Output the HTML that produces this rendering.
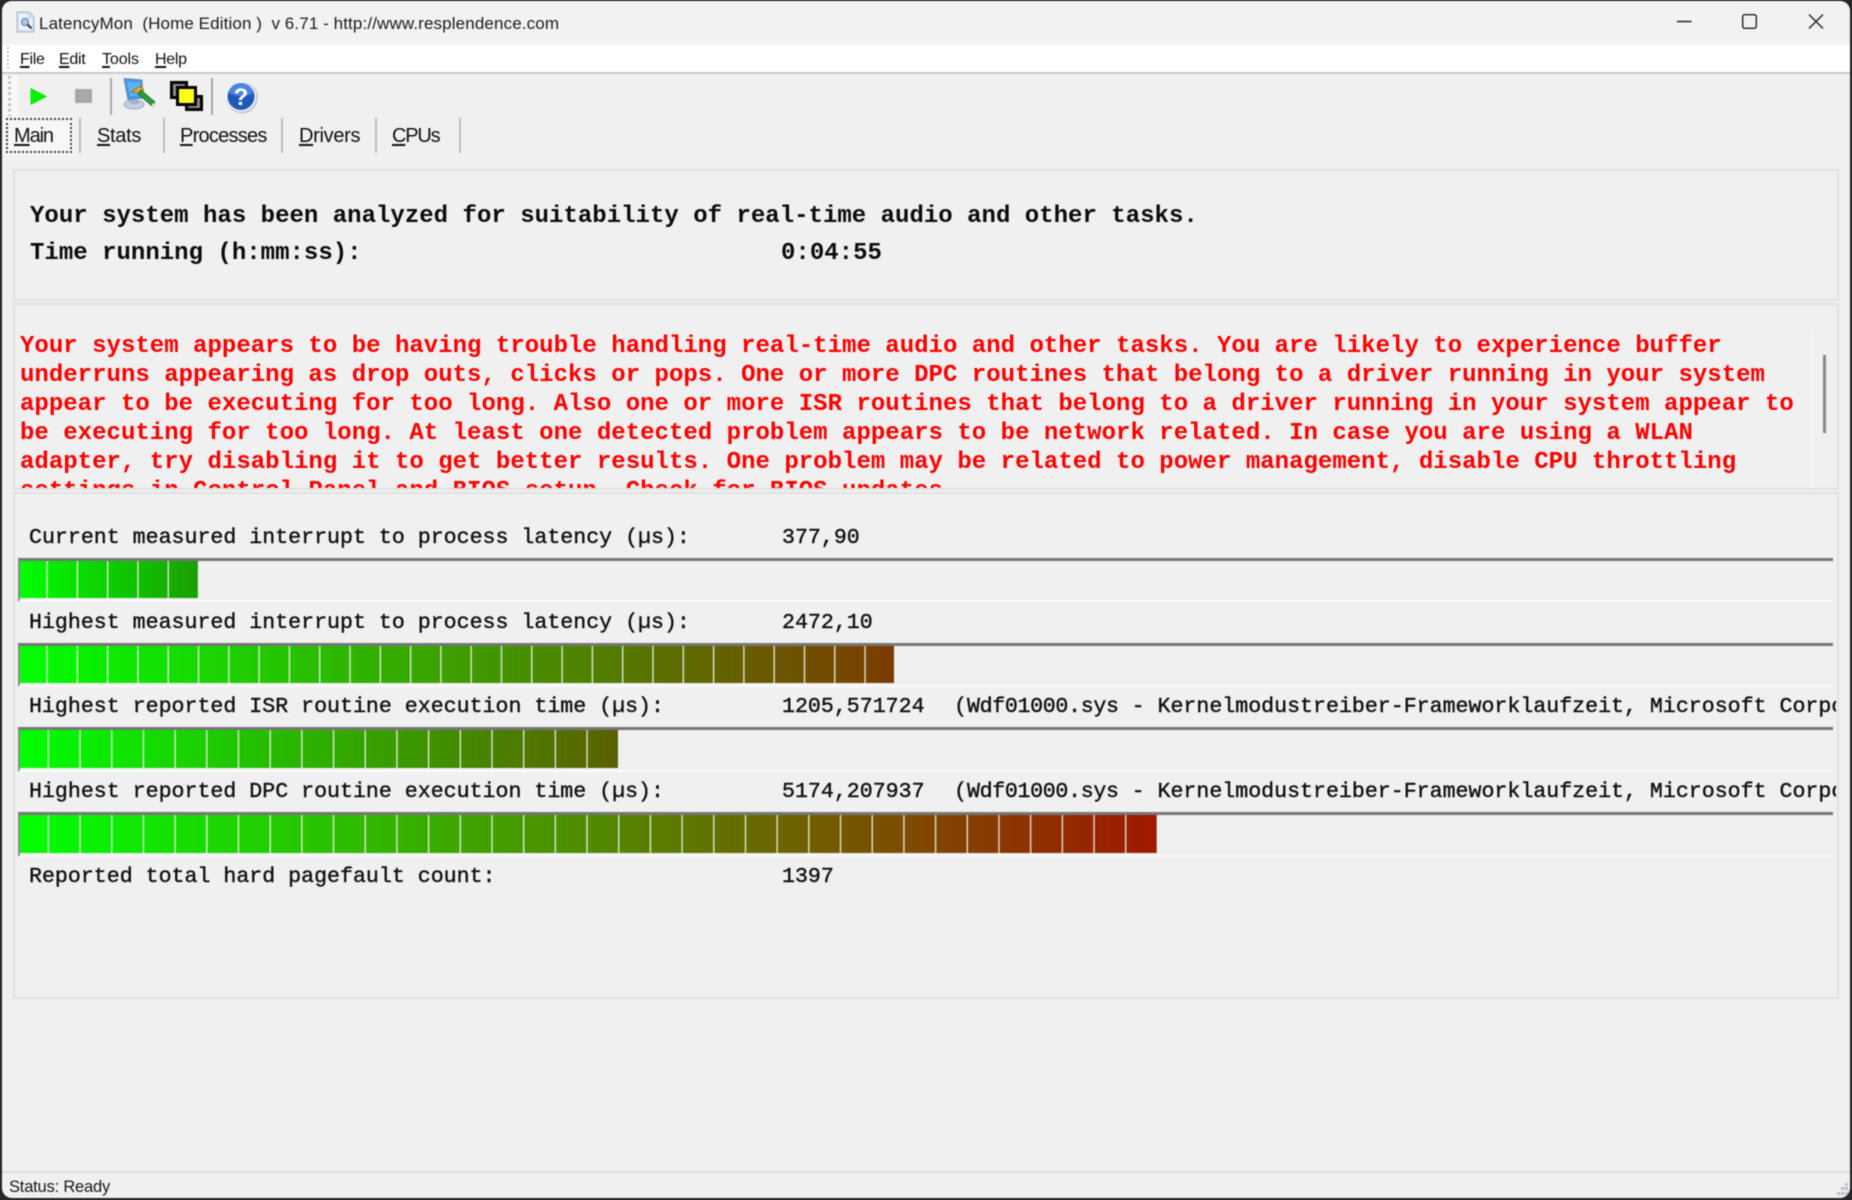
<!DOCTYPE html>
<html><head><meta charset="utf-8"><title>LatencyMon</title>
<style>
html,body{margin:0;padding:0;width:1852px;height:1200px;overflow:hidden;background:#24262a}
#w{position:absolute;left:2px;top:1px;width:1848px;height:1197px;background:#f0f0f0;border-radius:10px;overflow:hidden;filter:blur(.45px)}
#c{position:absolute;left:-2px;top:-1px;width:1852px;height:1200px}
.a{position:absolute;white-space:pre}
.s{font-family:"Liberation Sans",sans-serif;color:#111}
.m{font-family:"Liberation Mono",monospace;color:#111}
.h{font-size:24px;font-weight:bold;height:28px;line-height:28px;color:#0c0c0c;letter-spacing:.015px}
.l{font-size:21.6px;height:26px;line-height:26px;-webkit-text-stroke:.4px #111}
.r{left:20px;font-size:24px;font-weight:bold;height:29px;line-height:29px;color:#ff0000;letter-spacing:.019px}
.p{position:absolute;border:2px solid #e1e1e1;box-sizing:border-box}
.b{position:absolute;left:18px;width:1815px;box-sizing:border-box;border-top:3px solid #767676;border-left:2px solid #8a8a8a;border-bottom:2px solid #fbfbfb;background:#f0f0f0}
.f{position:absolute;left:0;top:0;height:calc(100% - 2px)}
.t{font-size:20px;height:26px;line-height:26px;top:123px}
.n{font-size:16px;height:20px;line-height:20px;top:50px}
u{text-underline-offset:2px;text-decoration-thickness:1.5px}
.v{position:absolute;width:2px;background:#bdbdbd}
</style></head><body>
<div id="w"><div id="c">

<!-- title bar -->
<div class="a" style="left:0;top:0;width:1852px;height:45px;background:#f2f2f2"></div>
<svg class="a" style="left:15px;top:11px" width="21" height="22" viewBox="0 0 21 22">
<path d="M2 1h12l5 5v15H2z" fill="#d5def0" stroke="#a9b8d2"/>
<path d="M4 3h8v5h5v11H4z" fill="#eef3fb"/>
<circle cx="10" cy="11" r="3.6" fill="#a5c5e6" stroke="#5f7da2"/>
<path d="M12.5 13.5l4 4" stroke="#30363f" stroke-width="2"/>
</svg>
<div class="a s" style="left:39px;top:12px;height:24px;line-height:24px;font-size:17px;letter-spacing:.13px;word-spacing:-.15px;color:#1c1c1c">LatencyMon  (Home Edition )  v 6.71 - http://www.resplendence.com</div>
<svg class="a" style="left:1670px;top:8px" width="170" height="28" viewBox="0 0 170 28" fill="none" stroke="#222" stroke-width="1.4">
<path d="M7 13.5h14.5"/>
<rect x="72.7" y="6.7" width="13.6" height="13.6" rx="2"/>
<path d="M139 6.5l14 14M153 6.5l-14 14"/>
</svg>

<!-- menu -->
<div class="a" style="left:0;top:45px;width:1852px;height:27px;background:#fff"></div>
<div class="a" style="left:0;top:72px;width:1852px;height:2px;background:#c9c9c9"></div>
<div class="a" style="left:7px;top:47px;width:2px;height:24px;background:repeating-linear-gradient(#c8c8c8 0 2px,transparent 2px 4px)"></div>
<div class="a s n" style="left:20px;letter-spacing:-.3px"><u>F</u>ile</div>
<div class="a s n" style="left:59px;letter-spacing:-.3px"><u>E</u>dit</div>
<div class="a s n" style="left:102px;letter-spacing:-.1px"><u>T</u>ools</div>
<div class="a s n" style="left:155px;letter-spacing:-.3px"><u>H</u>elp</div>

<!-- toolbar -->
<div class="a" style="left:3px;top:75px;width:15px;height:41px;background:#f8f8f8"></div>
<div class="a" style="left:8px;top:76px;width:3px;height:40px;background:repeating-linear-gradient(#bdbdbd 0 2.5px,transparent 2.5px 5.5px)"></div>
<svg class="a" style="left:30px;top:88px" width="18" height="17" viewBox="0 0 18 17"><path d="M0.5 0v17L17.5 8.5z" fill="#06f000"/></svg>
<div class="a" style="left:75px;top:89px;width:17px;height:14px;background:#a8a8a8"></div>
<div class="v" style="left:109.5px;top:78px;height:37px;background:#a9a9a9"></div>
<div class="v" style="left:210.5px;top:78px;height:37px;background:#a9a9a9"></div>
<svg class="a" style="left:121px;top:77px" width="37" height="34" viewBox="0 0 37 34">
<path d="M3 1.5l18 1.5 1 18-15 2z" fill="#3f97ea" stroke="#6f8cb5"/>
<path d="M6 4.5l13 1 .8 12-10.800 2z" fill="#5db4f4"/>
<ellipse cx="13" cy="27.500" rx="10" ry="4.500" fill="#c4cfe4" stroke="#a0aac8"/>
<path d="M9 23h9v4H9z" fill="#9fb2d6"/>
<path d="M10 15l9-6 4 4-3 3z" fill="#e9a93a" stroke="#7a5a10" stroke-width=".6"/>
<path d="M20 13l14 12-3 4-14-12z" fill="#2e9a3a" stroke="#1d5a25" stroke-width=".7"/>
<path d="M32 26l3 3-1.500 2-3-3z" fill="#d9e9c0"/>
</svg>
<svg class="a" style="left:170px;top:81px" width="33" height="30" viewBox="0 0 33 30">
<rect x="1.500" y="1.500" width="15" height="15" fill="#8a8a8a" stroke="#000" stroke-width="3"/>
<rect x="16.500" y="15.500" width="15" height="13" fill="#8a8a8a" stroke="#000" stroke-width="3"/>
<rect x="7.500" y="6.500" width="18" height="17" fill="#ffff18" stroke="#000" stroke-width="3"/>
</svg>
<svg class="a" style="left:224px;top:80px" width="35" height="34" viewBox="0 0 35 34">
<circle cx="18" cy="17.500" r="16" fill="#c4cad6"/>
<circle cx="17" cy="16.500" r="15" fill="#f4f6fa"/>
<circle cx="17" cy="16.500" r="13.500" fill="#1f58b8"/>
<path d="M5 13a12 10 0 0 1 24 0c-7 4-16 4-24 0z" fill="#4d86dc"/>
<text x="17" y="25" text-anchor="middle" font-family="Liberation Sans,sans-serif" font-weight="bold" font-size="24" fill="#fff">?</text>
</svg>

<!-- tabs -->
<div class="a" style="left:3px;top:116px;width:71px;height:39px;background:#f7f7f7"></div>
<div class="a" style="left:6px;top:118px;width:66px;height:35px;box-sizing:border-box;border:2px dotted #3a3a3a"></div>
<div class="a s t" style="left:14px;letter-spacing:-1.1px"><u>M</u>ain</div>
<div class="a s t" style="left:97px;letter-spacing:-.3px"><u>S</u>tats</div>
<div class="a s t" style="left:180px;letter-spacing:-.75px"><u>P</u>rocesses</div>
<div class="a s t" style="left:299px;letter-spacing:-.3px"><u>D</u>rivers</div>
<div class="a s t" style="left:392px;letter-spacing:-1.2px"><u>C</u>PUs</div>
<div class="v" style="left:79px;top:118px;height:35px"></div>
<div class="v" style="left:163px;top:118px;height:35px"></div>
<div class="v" style="left:281px;top:118px;height:35px"></div>
<div class="v" style="left:375px;top:118px;height:35px"></div>
<div class="v" style="left:458.500px;top:118px;height:35px"></div>

<!-- panel 1 -->
<div class="p" style="left:13px;top:169px;width:1826px;height:132px"></div>
<div class="a m h" style="left:30px;top:203px">Your system has been analyzed for suitability of real-time audio and other tasks.</div>
<div class="a m h" style="left:30px;top:240px">Time running (h:mm:ss):</div>
<div class="a m h" style="left:781px;top:240px">0:04:55</div>

<!-- panel 2 -->
<div class="p" style="left:13px;top:303px;width:1826px;height:187px"></div>
<div class="a" style="left:15px;top:330px;width:1800px;height:158px;overflow:hidden">
<div class="a m r" style="left:5px;top:2px">Your system appears to be having trouble handling real-time audio and other tasks. You are likely to experience buffer</div>
<div class="a m r" style="left:5px;top:31px">underruns appearing as drop outs, clicks or pops. One or more DPC routines that belong to a driver running in your system</div>
<div class="a m r" style="left:5px;top:60px">appear to be executing for too long. Also one or more ISR routines that belong to a driver running in your system appear to</div>
<div class="a m r" style="left:5px;top:88.500px">be executing for too long. At least one detected problem appears to be network related. In case you are using a WLAN</div>
<div class="a m r" style="left:5px;top:117.500px">adapter, try disabling it to get better results. One problem may be related to power management, disable CPU throttling</div>
<div class="a m r" style="left:5px;top:146.500px">settings in Control Panel and BIOS setup. Check for BIOS updates.</div>
</div>
<div class="a" style="left:1812px;top:330px;width:1px;height:159px;background:#fff"></div>
<div class="a" style="left:1823px;top:355px;width:3px;height:78px;background:#8a8a8a"></div>

<!-- panel 3 -->
<div class="p" style="left:13px;top:492px;width:1826px;height:507px"></div>

<div class="a m l" style="left:29px;top:525px">Current measured interrupt to process latency (µs):</div>
<div class="a m l" style="left:782px;top:525px">377,90</div>
<div class="b" style="top:558px;height:44px"><div class="f" style="width:178px;background:linear-gradient(90deg,transparent 0 28.800px,rgba(235,240,228,.85) 28.800px 30.300px) -2.500px 0/30.300px 100% repeat-x,linear-gradient(90deg,#00ff00,#1a9e00)"></div></div>

<div class="a m l" style="left:29px;top:610px">Highest measured interrupt to process latency (µs):</div>
<div class="a m l" style="left:782px;top:610px">2472,10</div>
<div class="b" style="top:643px;height:44px"><div class="f" style="width:874px;background:linear-gradient(90deg,transparent 0 28.800px,rgba(235,240,228,.85) 28.800px 30.300px) -2.500px 0/30.300px 100% repeat-x,linear-gradient(90deg,#00ff00,#7c3c00)"></div></div>

<div class="a m l" style="left:29px;top:694px">Highest reported ISR routine execution time (µs):</div>
<div class="a m l" style="left:782px;top:694px">1205,571724</div>
<div class="a" style="left:954px;top:694px;width:882px;height:26px;overflow:hidden"><span class="a m l" style="left:0;top:0">(<span style="letter-spacing:-.32px">Wdf01000.sys</span> - Kernelmodustreiber-Frameworklaufzeit, Microsoft Corporation)</span></div>
<div class="b" style="top:727px;height:45px"><div class="f" style="width:598.200px;background:linear-gradient(90deg,transparent 0 30.200px,rgba(235,240,228,.85) 30.200px 31.700px) -2.600px 0/31.700px 100% repeat-x,linear-gradient(90deg,#00ff00,#5c6000)"></div></div>

<div class="a m l" style="left:29px;top:779px">Highest reported DPC routine execution time (µs):</div>
<div class="a m l" style="left:782px;top:779px">5174,207937</div>
<div class="a" style="left:954px;top:779px;width:882px;height:26px;overflow:hidden"><span class="a m l" style="left:0;top:0">(<span style="letter-spacing:-.32px">Wdf01000.sys</span> - Kernelmodustreiber-Frameworklaufzeit, Microsoft Corporation)</span></div>
<div class="b" style="top:812px;height:45px"><div class="f" style="width:1137.100px;background:linear-gradient(90deg,transparent 0 30.200px,rgba(235,240,228,.85) 30.200px 31.700px) -2.600px 0/31.700px 100% repeat-x,linear-gradient(90deg,#00ff00,#a01800)"></div></div>

<div class="a m l" style="left:29px;top:864px">Reported total hard pagefault count:</div>
<div class="a m l" style="left:782px;top:864px">1397</div>

<!-- status -->
<div class="a" style="left:0;top:1171px;width:1852px;height:2px;background:#dcdcdc"></div>
<div class="a s" style="left:9px;top:1176px;height:22px;line-height:22px;font-size:16.500px;color:#1a1a1a;letter-spacing:-.2px">Status: Ready</div>
<svg class="a" style="left:1835px;top:1182px" width="15" height="15" fill="#bdbdbd"><rect x="10" y="1" width="3" height="3"/><rect x="6" y="5" width="3" height="3"/><rect x="10" y="5" width="3" height="3"/><rect x="2" y="10" width="3" height="3"/><rect x="6" y="10" width="3" height="3"/><rect x="10" y="10" width="3" height="3"/></svg>

</div></div>
</body></html>
